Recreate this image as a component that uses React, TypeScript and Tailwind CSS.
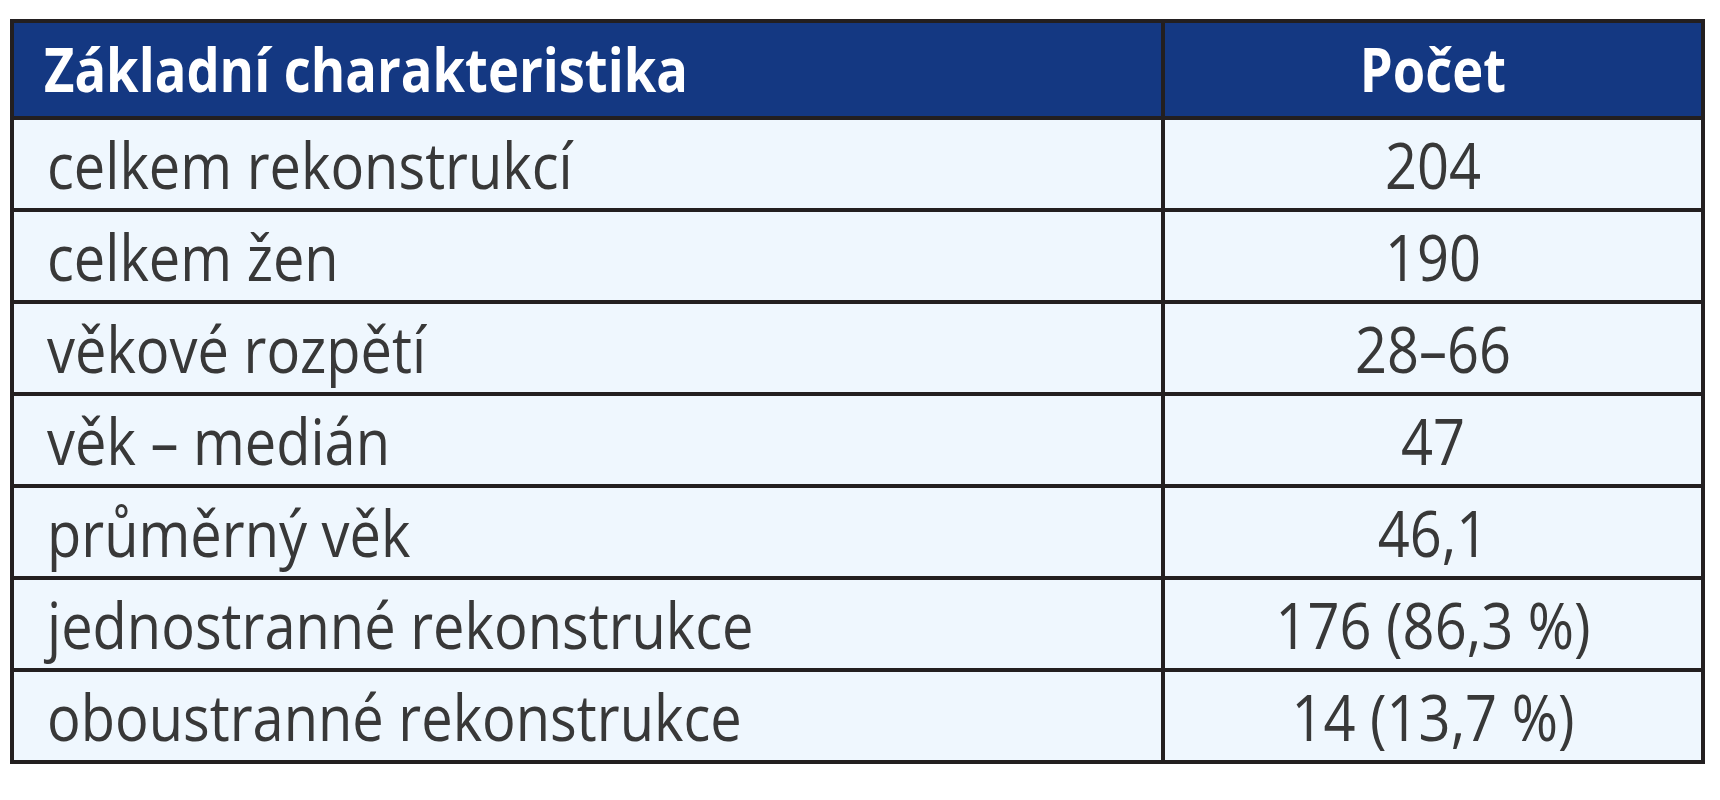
import React from "react";

const rows: [string, string][] = [
  ["celkem rekonstrukcí", "204"],
  ["celkem žen", "190"],
  ["věkové rozpětí", "28–66"],
  ["věk – medián", "47"],
  ["průměrný věk", "46,1"],
  ["jednostranné rekonstrukce", "176 (86,3 %)"],
  ["oboustranné rekonstrukce", "14 (13,7 %)"],
];

export default function App() {
  return (
    <div className="w-[1720px] h-[800px] bg-white pt-[19px] pl-[10px]" style={{ fontFamily: '"Open Sans", "Noto Sans", sans-serif' }}>
      <div className="w-[1695px] border-4 border-[#231f20] bg-[#231f20] grid grid-cols-[1147px_536px] grid-rows-[93px_repeat(7,88px)] gap-[4px]">
        <div className="bg-[#143882] flex items-center pl-[30px] text-white font-bold text-[52.5px] leading-none">
          <span className="inline-block scale-y-[1.15]">Základní charakteristika</span>
        </div>
        <div className="bg-[#143882] flex items-center justify-center text-white font-bold text-[52.5px] leading-none">
          <span className="inline-block scale-y-[1.15]">Počet</span>
        </div>
        {rows.map(([a, b]) => (
          <React.Fragment key={a}>
            <div className="bg-[#eff7fe] flex items-center pl-[33px] text-[#383838] text-[56px] leading-none">
              <span className="inline-block scale-y-[1.15]">{a}</span>
            </div>
            <div className="bg-[#eff7fe] flex items-center justify-center text-[#383838] text-[56px] leading-none">
              <span className="inline-block scale-y-[1.15]">{b}</span>
            </div>
          </React.Fragment>
        ))}
      </div>
    </div>
  );
}
